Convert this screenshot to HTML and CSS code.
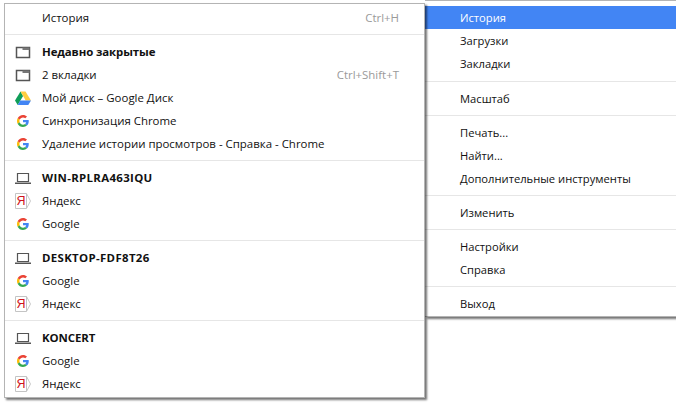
FILE: index.html
```html
<!DOCTYPE html>
<html lang="ru">
<head>
<meta charset="utf-8">
<title>Меню</title>
<link rel="stylesheet" href="styles.css">
</head>
<body>
<svg class="defs" width="0" height="0" aria-hidden="true">
  <symbol id="tab" viewBox="0 0 16 16">
    <path d="M1.500 3.500h13v10h-13z" fill="#fff" stroke="#555" stroke-width="1.500"/>
    <path d="M7.500 3.500h7v2.500h-7z" fill="#777"/>
  </symbol>
  <symbol id="laptop" viewBox="0 0 16 16">
    <path d="M2.500 3.500h11v8h-11z" fill="none" stroke="#555" stroke-width="1.200"/>
    <path d="M0 12.500h16V14H0z" fill="#555"/>
  </symbol>
  <symbol id="google" viewBox="-8 -8 64 64">
    <path fill="#EA4335" d="M24 9.500c3.500 0 6.700 1.200 9.200 3.600l6.900-6.900C35.900 2.400 30.500 0 24 0 14.600 0 6.500 5.400 2.600 13.200l8 6.200C12.400 13.700 17.700 9.500 24 9.500z"/>
    <path fill="#4285F4" d="M46.980 24.500c0-1.600-.15-3.100-.4-4.500H24v9h12.900c-.6 3-2.200 5.400-4.700 7.100l7.700 6c4.500-4.200 7.100-10.300 7.100-17.600z"/>
    <path fill="#FBBC05" d="M10.500 28.600c-.5-1.400-.8-3-.8-4.600s.3-3.200.8-4.600l-8-6.200C.9 16.500 0 20.100 0 24s.9 7.500 2.600 10.800l7.900-6.200z"/>
    <path fill="#34A853" d="M24 48c6.500 0 11.900-2.100 15.900-5.800l-7.700-6c-2.200 1.400-4.900 2.300-8.200 2.300-6.300 0-11.600-4.200-13.500-9.900l-8 6.200C6.500 42.600 14.600 48 24 48z"/>
  </symbol>
  <symbol id="drive" viewBox="0 0 16 16">
    <path fill="#0F9D58" d="M5.500 1.500 0 10.500l2.700 4.500 5.400-9z"/>
    <path fill="#FFCD40" d="M5.500 1.500h5l5.500 9h-5.300z"/>
    <path fill="#4285F4" d="M2.700 15h10.600l2.700-4.500H5.300z"/>
  </symbol>
  <symbol id="yandex" viewBox="0 0 16 16">
    <path d="M11.500 .5l4 7.500-4 7.500" fill="#fff" stroke="#c9c9c9"/>
    <path d="M.5.500h11v15H.5z" fill="#fff" stroke="#c4c4c4"/>
  </symbol>
</svg>

<div class="menu left">
  <div class="group first">
    <div class="row"><span class="label">История</span><span class="key">Ctrl+H</span></div>
  </div>
  <div class="group">
    <div class="row"><svg class="ico"><use href="#tab"/></svg><span class="label strong">Недавно закрытые</span></div>
    <div class="row"><svg class="ico"><use href="#tab"/></svg><span class="label">2 вкладки</span><span class="key">Ctrl+Shift+T</span></div>
    <div class="row"><svg class="ico"><use href="#drive"/></svg><span class="label">Мой диск – Google Диск</span></div>
    <div class="row"><svg class="ico"><use href="#google"/></svg><span class="label">Синхронизация Chrome</span></div>
    <div class="row"><svg class="ico"><use href="#google"/></svg><span class="label">Удаление истории просмотров - Справка - Chrome</span></div>
  </div>
  <div class="group">
    <div class="row"><svg class="ico"><use href="#laptop"/></svg><span class="label strong wide">WIN-RPLRA463IQU</span></div>
    <div class="row"><svg class="ico"><use href="#yandex"/></svg><span class="ya">Я</span><span class="label">Яндекс</span></div>
    <div class="row"><svg class="ico"><use href="#google"/></svg><span class="label">Google</span></div>
  </div>
  <div class="group">
    <div class="row"><svg class="ico"><use href="#laptop"/></svg><span class="label strong wide">DESKTOP-FDF8T26</span></div>
    <div class="row"><svg class="ico"><use href="#google"/></svg><span class="label">Google</span></div>
    <div class="row"><svg class="ico"><use href="#yandex"/></svg><span class="ya">Я</span><span class="label">Яндекс</span></div>
  </div>
  <div class="group">
    <div class="row"><svg class="ico"><use href="#laptop"/></svg><span class="label strong">KONCERT</span></div>
    <div class="row"><svg class="ico"><use href="#google"/></svg><span class="label">Google</span></div>
    <div class="row"><svg class="ico"><use href="#yandex"/></svg><span class="ya">Я</span><span class="label">Яндекс</span></div>
  </div>
</div>

<div class="menu right">
  <div class="group first">
    <div class="row active"><span class="label">История</span></div>
    <div class="row"><span class="label">Загрузки</span></div>
    <div class="row"><span class="label">Закладки</span></div>
  </div>
  <div class="group"><div class="row"><span class="label">Масштаб</span></div></div>
  <div class="group">
    <div class="row"><span class="label">Печать...</span></div>
    <div class="row"><span class="label">Найти...</span></div>
    <div class="row"><span class="label">Дополнительные инструменты</span></div>
  </div>
  <div class="group"><div class="row"><span class="label">Изменить</span></div></div>
  <div class="group">
    <div class="row"><span class="label">Настройки</span></div>
    <div class="row"><span class="label">Справка</span></div>
  </div>
  <div class="group"><div class="row"><span class="label">Выход</span></div></div>
</div>
</body>
</html>
```

FILE: styles.css
```css
html, body {
  margin: 0;
  height: 404px;
  overflow: hidden;
  background: #fff;
  font-family: "Open Sans", "Noto Sans", sans-serif;
  font-size: 11.45px;
  color: #111;
}
.defs { position: absolute; }
.menu {
  position: absolute;
  box-sizing: border-box;
  background: #fff;
  border: 1px solid #b4b4b4;
  box-shadow: 2px 2px 2px rgba(0, 0, 0, .55);
}
.left {
  left: 4px;
  top: 3px;
  width: 421px;
  height: 395px;
  z-index: 2;
}
.right {
  left: 425px;
  top: 0;
  width: 260px;
  height: 317px;
  padding-top: 5px;
  border-left: 0;
  font-size: 11.2px;
}
.group {
  padding: 5px 0;
  border-top: 1px solid #e6e6e6;
}
.first { border-top: 0; padding-top: 0; }
.left .first { padding-top: 2px; }
.right .first { padding-bottom: 6px; }
.row {
  display: flex;
  align-items: center;
  height: 23px;
  white-space: nowrap;
}
.left .row { padding: 0 25px 0 37px; position: relative; }
.right .row { padding-left: 35px; }
.ico {
  position: absolute;
  left: 10px;
  top: 4px;
  width: 16px;
  height: 16px;
}
.label { flex: 1; }
.strong { font-weight: 700; letter-spacing: -.1px; }
.wide { letter-spacing: .33px; }
.key { color: #9a9a9a; }
.active { background: #4285f4; color: #fff; }
.ya {
  position: absolute;
  left: 10px;
  top: 4px;
  width: 12px;
  height: 16px;
  font-family: "Liberation Sans", sans-serif;
  font-size: 12.5px;
  line-height: 16px;
  text-align: center;
  color: #d0121b;
}
```
